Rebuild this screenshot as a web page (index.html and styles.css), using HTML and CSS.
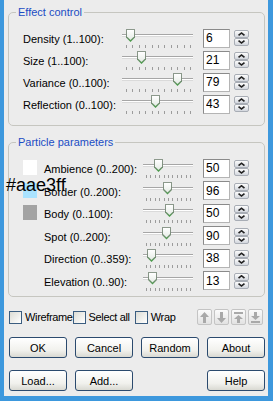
FILE: index.html
```html
<!DOCTYPE html>
<html lang="en">
<head>
  <meta charset="UTF-8">
  <meta name="viewport" content="width=device-width, initial-scale=1.0">
  <title>Particles</title>
  <link rel="stylesheet" href="styles.css">
</head>
<body>

  <div class="window">
    <span class="hex">#aae3ff</span>

    <fieldset class="group">
      <legend>Effect control</legend>
      <div class="row">
        <label>Density (1..100):</label>
        <div class="slider"><span class="track"></span><span class="thumb" style="left: 4px"></span><span class="ticks"></span></div>
        <input class="num" type="text" value="6">
        <span class="spin"><b class="up"></b><b class="down"></b></span>
      </div>
      <div class="row">
        <label>Size (1..100):</label>
        <div class="slider"><span class="track"></span><span class="thumb" style="left: 15px"></span><span class="ticks"></span></div>
        <input class="num" type="text" value="21">
        <span class="spin"><b class="up"></b><b class="down"></b></span>
      </div>
      <div class="row">
        <label>Variance (0..100):</label>
        <div class="slider"><span class="track"></span><span class="thumb" style="left: 51px"></span><span class="ticks"></span></div>
        <input class="num" type="text" value="79">
        <span class="spin"><b class="up"></b><b class="down"></b></span>
      </div>
      <div class="row">
        <label>Reflection (0..100):</label>
        <div class="slider"><span class="track"></span><span class="thumb" style="left: 29px"></span><span class="ticks"></span></div>
        <input class="num" type="text" value="43">
        <span class="spin"><b class="up"></b><b class="down"></b></span>
      </div>
    </fieldset>

    <fieldset class="group particles">
      <legend>Particle parameters</legend>
      <div class="row">
        <span class="swatch white"></span>
        <label>Ambience (0..200):</label>
        <div class="slider short"><span class="track"></span><span class="thumb" style="left: 11px"></span><span class="ticks"></span></div>
        <input class="num" type="text" value="50">
        <span class="spin"><b class="up"></b><b class="down"></b></span>
      </div>
      <div class="row">
        <span class="swatch blue"></span>
        <label>Border (0..200):</label>
        <div class="slider short"><span class="track"></span><span class="thumb" style="left: 20px"></span><span class="ticks"></span></div>
        <input class="num" type="text" value="96">
        <span class="spin"><b class="up"></b><b class="down"></b></span>
      </div>
      <div class="row">
        <span class="swatch gray"></span>
        <label>Body (0..100):</label>
        <div class="slider short"><span class="track"></span><span class="thumb" style="left: 22px"></span><span class="ticks"></span></div>
        <input class="num" type="text" value="50">
        <span class="spin"><b class="up"></b><b class="down"></b></span>
      </div>
      <div class="row">
        <span class="swatch"></span>
        <label>Spot (0..200):</label>
        <div class="slider short"><span class="track"></span><span class="thumb" style="left: 19px"></span><span class="ticks"></span></div>
        <input class="num" type="text" value="90">
        <span class="spin"><b class="up"></b><b class="down"></b></span>
      </div>
      <div class="row">
        <span class="swatch"></span>
        <label>Direction (0..359):</label>
        <div class="slider short"><span class="track"></span><span class="thumb" style="left: 4px"></span><span class="ticks"></span></div>
        <input class="num" type="text" value="38">
        <span class="spin"><b class="up"></b><b class="down"></b></span>
      </div>
      <div class="row">
        <span class="swatch"></span>
        <label>Elevation (0..90):</label>
        <div class="slider short"><span class="track"></span><span class="thumb" style="left: 5px"></span><span class="ticks"></span></div>
        <input class="num" type="text" value="13">
        <span class="spin"><b class="up"></b><b class="down"></b></span>
      </div>
    </fieldset>

    <div class="options">
      <label class="check"><input type="checkbox"> Wireframe</label>
      <label class="check"><input type="checkbox"> Select all</label>
      <label class="check"><input type="checkbox"> Wrap</label>
      <div class="moves">
        <span class="move"><svg width="9" height="11" viewBox="0 0 9 11"><polygon points="4.5,0 9,5 6,5 6,11 3,11 3,5 0,5"/></svg></span>
        <span class="move"><svg width="9" height="11" viewBox="0 0 9 11"><polygon points="3,0 6,0 6,6 9,6 4.5,11 0,6 3,6"/></svg></span>
        <span class="move"><svg width="9" height="11" viewBox="0 0 9 11"><rect x="0" y="0" width="9" height="2"/><polygon points="4.5,3 9,7 6,7 6,11 3,11 3,7 0,7"/></svg></span>
        <span class="move"><svg width="9" height="11" viewBox="0 0 9 11"><polygon points="3,0 6,0 6,4 9,4 4.5,8 0,4 3,4"/><rect x="0" y="9" width="9" height="2"/></svg></span>
      </div>
    </div>

    <div class="buttons">
      <button>OK</button>
      <button>Cancel</button>
      <button>Random</button>
      <button>About</button>
      <button>Load...</button>
      <button>Add...</button>
      <button class="help">Help</button>
    </div>
  </div>

</body>
</html>
```

FILE: styles.css
```css
* {
  box-sizing: border-box;
}
body {
  margin: 0;
  font-family: "Liberation Sans", Arial, sans-serif;
  font-size: 11px;
  color: #000;
}
.window {
  position: relative;
  width: 273px;
  height: 401px;
  background-color: #ececec;
  border-left: 4px solid #3d98dd;
  border-right: 5px solid #3d98dd;
  border-bottom: 5px solid #3d98dd;
  padding: 5px 3px 0 4px;
}
.hex {
  position: absolute;
  left: 2px;
  top: 176px;
  font-family: "Liberation Sans", Arial, sans-serif;
  font-size: 18px;
  line-height: 18px;
  z-index: 2;
}
.group {
  margin: 0;
  padding: 9px 0 9px 14px;
  border: 1px solid #c6c6c0;
  border-radius: 5px;
  min-width: 0;
}
.group legend {
  margin-left: -7px;
  padding: 0 2px;
  color: #1b4dc4;
  font-size: 11px;
  line-height: 14px;
}
.particles {
  margin-top: 9px;
  padding-bottom: 3px;
}
.row {
  display: flex;
  align-items: center;
  height: 22px;
}
.particles .row {
  height: 22.5px;
}
.row label {
  width: 99px;
  white-space: nowrap;
}
.swatch {
  width: 14px;
  height: 15px;
  margin-right: 7px;
  margin-top: -3px;
}
.swatch.white {
  background-color: #ffffff;
}
.swatch.blue {
  background-color: #aae3ff;
}
.swatch.gray {
  background-color: #a3a3a3;
}
.slider {
  position: relative;
  align-self: stretch;
  width: 71px;
  padding-top: 6px;
}
.slider.short {
  width: 50px;
}
.track {
  display: block;
  height: 3px;
  border-top: 1px solid #a6a6a6;
  border-bottom: 1px solid #dadada;
  background-color: #ffffff;
}
.ticks {
  display: block;
  width: 65px;
  height: 3px;
  margin: 8px 0 0 4px;
  background: repeating-linear-gradient(90deg, #9c9c9c 0 1px, transparent 1px 6.4px);
}
.short .ticks {
  width: 45px;
  margin-left: 3px;
  background: repeating-linear-gradient(90deg, #9c9c9c 0 1px, transparent 1px 4.4px);
}
.thumb {
  position: absolute;
  top: 1px;
  width: 9px;
  height: 13px;
  background: linear-gradient(#8d9a8d, #7a8c7a 60%, #3f9f3f);
  clip-path: polygon(0 0, 100% 0, 100% 66%, 50% 100%, 0 66%);
}
.thumb::before {
  content: '';
  position: absolute;
  inset: 1px 1px 2px 1px;
  background: linear-gradient(#ffffff, #e4ebe4);
  clip-path: polygon(0 0, 100% 0, 100% 66%, 50% 100%, 0 66%);
}
.num {
  width: 27px;
  height: 19px;
  margin-left: 10px;
  margin-top: -2px;
  padding: 0 0 0 2px;
  border: 1px solid #8a8a8a;
  border-right-color: #b4b4b4;
  border-bottom-color: #b4b4b4;
  background-color: #ffffff;
  font-family: "Liberation Sans", Arial, sans-serif;
  font-size: 12px;
  color: #000;
}
.spin {
  display: flex;
  flex-direction: column;
  width: 15px;
  height: 16px;
  margin-left: 4px;
  margin-top: -2px;
}
.spin b {
  display: flex;
  align-items: center;
  justify-content: center;
  height: 8px;
  border: 1px solid #a8adb5;
  border-radius: 2px;
  background: linear-gradient(#fcfcfc, #d3d7de);
}
.spin b::before {
  content: '';
  width: 7px;
  height: 4px;
  background-color: #222;
  clip-path: polygon(50% 0, 100% 70%, 85% 100%, 50% 50%, 15% 100%, 0 70%);
}
.spin .down::before {
  transform: rotate(180deg);
}
.options {
  display: flex;
  align-items: center;
  height: 16px;
  margin-top: 12px;
  padding-left: 1px;
}
.check {
  display: flex;
  align-items: center;
  width: 69px;
  white-space: nowrap;
  letter-spacing: -0.35px;
}
.check input {
  appearance: none;
  width: 13px;
  height: 13px;
  margin: 0 3px 0 0;
  border: 1px solid #3b5d80;
  background: linear-gradient(135deg, #dcdcd5, #ffffff);
}
.moves {
  display: flex;
  gap: 2px;
  margin-left: auto;
  margin-right: 2px;
}
.move {
  display: flex;
  align-items: center;
  justify-content: center;
  width: 15px;
  height: 16px;
  border: 1px solid #c4c4c4;
  border-radius: 2px;
  background: linear-gradient(#fbfbfb, #e2e2e2);
}
.move svg {
  fill: #a9a9a9;
}
.buttons {
  display: grid;
  grid-template-columns: repeat(4, 58px);
  column-gap: 8px;
  row-gap: 12px;
  margin: 12px 0 0 1px;
}
button {
  height: 21px;
  padding: 0;
  border: 1px solid #2b4a6e;
  border-radius: 3px;
  background: linear-gradient(#ffffff, #f1f1ed 65%, #d9d9d2);
  font-family: "Liberation Sans", Arial, sans-serif;
  font-size: 11px;
  color: #000;
}
.help {
  grid-column: 4;
}
```
